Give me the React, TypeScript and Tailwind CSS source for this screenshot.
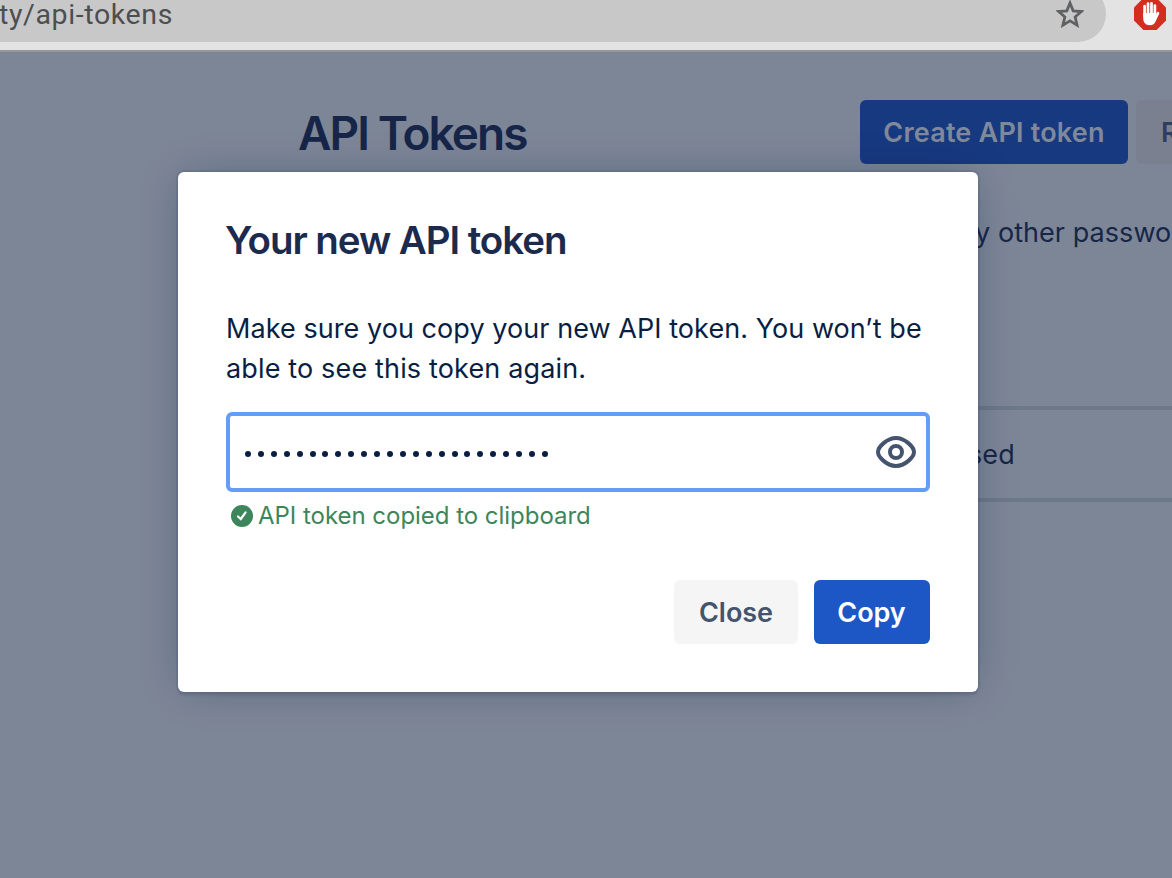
import React from "react";

function BrowserBar() {
  return (
    <header className="flex h-[52px] shrink-0 items-start justify-between overflow-hidden border-b-2 border-[#979797] bg-[#e3e3e3]">
      <div className="-mt-[14px] flex h-14 w-[1106px] shrink-0 items-start justify-between rounded-r-full bg-[#c8c8c8] pr-[22px] pt-[14px]">
        <span className="-ml-px -mt-px whitespace-nowrap font-['Roboto',sans-serif] text-[28.5px] leading-8 tracking-[0.62px] text-[#4c4e50]">
          ty/api-tokens
        </span>
        <svg viewBox="0 0 28 28" className="h-7 w-7" fill="none" stroke="#5f6265" strokeWidth="2.8">
          <path d="M14 3 L17.2 10.9 L25.4 11.5 L19.1 16.9 L21.1 25.2 L14 20.9 L6.9 25.2 L8.9 16.9 L2.6 11.5 L10.8 10.9 Z" />
        </svg>
      </div>
      <svg viewBox="0 0 32 32" className="-mt-[2px] mr-[6px] h-8 w-8 shrink-0">
        <path d="M9.4 0H22.6L32 9.4V22.6L22.6 32H9.4L0 22.6V9.4Z" fill="#d32d20" />
        <g stroke="#fff" strokeWidth="2.7" strokeLinecap="round" fill="none">
          <path d="M10.6 8.2V18M14 5.6V18M17.5 5.3V18M20.9 7.6V18" />
          <path d="M24 15.2L20.8 22" />
        </g>
        <path d="M9.25 15H22.2V18.4L22 22.5C20.8 26 18.8 27.3 15.8 27.3C11.6 27.3 9.25 24.6 9.25 20.6Z" fill="#fff" />
      </svg>
    </header>
  );
}

function TokensPage() {
  return (
    <main className="flex flex-1 flex-col overflow-hidden bg-[#7d8697] pt-12 text-[27px] tracking-[0.06px] text-[#172648]">
      <div className="flex h-16 shrink-0 items-center">
        <h1 className="ml-[298px] w-[562px] shrink-0 whitespace-nowrap pt-px text-[46px] font-semibold leading-[56px] tracking-[-1.95px]">
          API Tokens
        </h1>
        <button className="h-16 w-[268px] shrink-0 whitespace-nowrap rounded-[6px] bg-[#17397f] pt-[2px] font-semibold tracking-[0.2px] text-[#7f899b]">
          Create API token
        </button>
        <button className="ml-2 h-16 w-[200px] shrink-0 rounded-[6px] bg-[#7b8091] pl-[25px] pt-[2px] text-left font-semibold text-[#2e3e5d]">
          Revoke
        </button>
      </div>
      <p className="mt-[49px] shrink-0 whitespace-nowrap pl-[975px] leading-10">y other passwords</p>
      <div className="ml-[298px] mt-[153px] flex h-24 shrink-0 items-center border-y-4 border-[#6d7888] pl-[654px] pt-[2px]">
        used
      </div>
    </main>
  );
}

function EyeIcon() {
  return (
    <svg viewBox="0 0 40 32" className="h-8 w-10" fill="none" stroke="#44546f" strokeWidth="4">
      <path d="M20 2C29 2 38 11 38 16S29 30 20 30S2 21 2 16S11 2 20 2Z" />
      <circle cx="20" cy="16" r="6" />
    </svg>
  );
}

function TokenDialog() {
  return (
    <section
      role="dialog"
      className="absolute left-[178px] top-[172px] flex h-[520px] w-[800px] flex-col rounded-[6px] bg-white px-12 pt-12 text-[27px] text-[#1c2b4d] shadow-[0_0_0_2px_rgba(9,30,66,0.08),0_4px_2px_rgba(9,30,66,0.08),0_0_40px_-6px_rgba(9,30,66,0.31)]"
    >
      <h2 className="-ml-px whitespace-nowrap text-[38.5px] font-semibold leading-[41px] tracking-[-1.07px]">
        Your new API token
      </h2>
      <p className="mt-12 whitespace-nowrap leading-10 tracking-[0.06px] text-[#091e42]">
        Make sure you copy your new API token. You won’t be
        <br />
        <span className="tracking-[0.15px]">able to see this token again.</span>
      </p>
      <div className="mt-[23px] flex h-20 shrink-0 items-center justify-between rounded-[6px] border-4 border-[#649df8] pl-[15px] pr-[10px]">
        <div className="flex gap-[6.92px] pt-[3px]">
          {Array.from({ length: 24 }, (_, i) => (
            <span key={i} className="h-[6px] w-[6px] rounded-full bg-[#091e42]" />
          ))}
        </div>
        <EyeIcon />
      </div>
      <div className="mt-2 flex h-8 items-center gap-[5px] pl-[5px] text-[24px] tracking-[-0.03px] text-[#3d855b]">
        <svg viewBox="0 0 22 22" className="h-[22px] w-[22px] shrink-0">
          <circle cx="11" cy="11" r="11" fill="#3d855b" />
          <path d="M7 11.5L9.8 14L14.6 7.3" fill="none" stroke="#fff" strokeWidth="2.2" strokeLinecap="round" />
        </svg>
        <span className="whitespace-nowrap leading-8">API token copied to clipboard</span>
      </div>
      <div className="mt-12 flex justify-end gap-4 font-semibold tracking-[-0.05px]">
        <button className="h-16 w-[124px] rounded-[6px] bg-[#f5f5f5] pt-[2px] text-[#44546f]">Close</button>
        <button className="h-16 w-[116px] rounded-[6px] bg-[#1d56c5] pr-px pt-[2px] text-white">Copy</button>
      </div>
    </section>
  );
}

export default function App() {
  return (
    <div className="relative flex h-[878px] w-[1172px] flex-col overflow-hidden font-['Inter',sans-serif]">
      <BrowserBar />
      <TokensPage />
      <TokenDialog />
    </div>
  );
}
